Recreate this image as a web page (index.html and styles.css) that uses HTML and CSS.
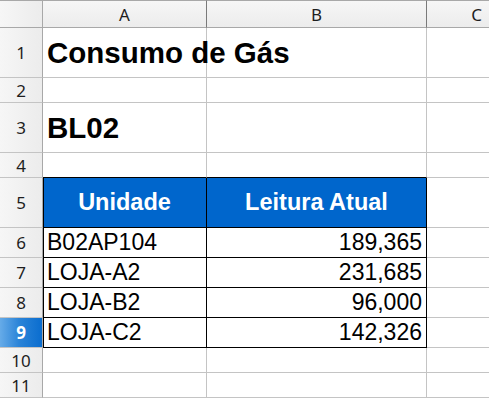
FILE: index.html
```html
<!DOCTYPE html>
<html lang="pt">
<head>
    <meta charset="UTF-8">
    <meta name="viewport" content="width=device-width, initial-scale=1.0">
    <title>Consumo de Gás</title>
    <link rel="stylesheet" href="styles.css">
</head>
<body>
    <div class="sheet">
        <div class="row head-row">
            <div class="rh corner"></div>
            <div class="ch col-a">A</div>
            <div class="ch col-b">B</div>
            <div class="ch col-c">C</div>
        </div>

        <div class="row tall">
            <div class="rh">1</div>
            <div class="cell col-a title">Consumo de Gás</div>
            <div class="cell col-b"></div>
            <div class="cell col-c"></div>
        </div>
        <div class="row short">
            <div class="rh">2</div>
            <div class="cell col-a"></div>
            <div class="cell col-b"></div>
            <div class="cell col-c"></div>
        </div>
        <div class="row tall">
            <div class="rh">3</div>
            <div class="cell col-a title">BL02</div>
            <div class="cell col-b"></div>
            <div class="cell col-c"></div>
        </div>
        <div class="row short">
            <div class="rh">4</div>
            <div class="cell col-a edge-bottom"></div>
            <div class="cell col-b edge-bottom"></div>
            <div class="cell col-c"></div>
        </div>

        <!-- table header -->
        <div class="row tall">
            <div class="rh">5</div>
            <div class="cell col-a boxed th">Unidade</div>
            <div class="cell col-b boxed th">Leitura Atual</div>
            <div class="cell col-c"></div>
        </div>
        <div class="row data">
            <div class="rh">6</div>
            <div class="cell col-a boxed">B02AP104</div>
            <div class="cell col-b boxed num">189,365</div>
            <div class="cell col-c"></div>
        </div>
        <div class="row data">
            <div class="rh">7</div>
            <div class="cell col-a boxed">LOJA-A2</div>
            <div class="cell col-b boxed num">231,685</div>
            <div class="cell col-c"></div>
        </div>
        <div class="row data">
            <div class="rh">8</div>
            <div class="cell col-a boxed">LOJA-B2</div>
            <div class="cell col-b boxed num">96,000</div>
            <div class="cell col-c"></div>
        </div>
        <div class="row data">
            <div class="rh selected">9</div>
            <div class="cell col-a boxed">LOJA-C2</div>
            <div class="cell col-b boxed num">142,326</div>
            <div class="cell col-c"></div>
        </div>

        <div class="row short">
            <div class="rh">10</div>
            <div class="cell col-a"></div>
            <div class="cell col-b"></div>
            <div class="cell col-c"></div>
        </div>
        <div class="row short">
            <div class="rh">11</div>
            <div class="cell col-a"></div>
            <div class="cell col-b"></div>
            <div class="cell col-c"></div>
        </div>
    </div>
</body>
</html>
```

FILE: styles.css
```css
body {
    margin: 0;
    background-color: white;
    overflow: hidden;
}

.sheet {
    width: 489px;
    height: 400px;
    overflow: hidden;
    font-family: "Liberation Sans", Arial, sans-serif;
    color: black;
}

.row {
    display: flex;
}

.head-row {
    height: 28px;
}

.tall {
    height: 50px;
}

.short {
    height: 25px;
}

.data {
    height: 30px;
}

.row > div {
    box-sizing: border-box;
    display: flex;
    align-items: center;
    flex-shrink: 0;
}

.col-a {
    width: 164px;
}

.col-b {
    width: 220px;
}

.col-c {
    width: 100px;
}

/* row and column headers */
.rh {
    width: 43px;
    justify-content: center;
    background: linear-gradient(to right, #f6f6f6, #ececec);
    border-right: 1px solid #a8a8a8;
    border-bottom: 1px solid #c4c4c4;
    font-family: "Noto Sans", "DejaVu Sans", sans-serif;
    font-size: 17px;
    color: #1e1e1e;
}

.rh.corner {
    border-bottom: 1px solid #a8a8a8;
}

.rh.selected {
    background: linear-gradient(to right, #66abe8, #2b84d8 45%, #0a6dcf);
    color: white;
    font-weight: bold;
}

.head-row > div {
    border-top: 1px solid #a8a8a8;
}

.ch {
    justify-content: center;
    background: linear-gradient(to bottom, #f6f6f6, #ececec);
    border-right: 1px solid #7a7a7a;
    border-bottom: 1px solid #a8a8a8;
    font-family: "Noto Sans", "DejaVu Sans", sans-serif;
    font-size: 17px;
    color: #1e1e1e;
}

/* grid cells */
.cell {
    border-right: 1px solid #c4c4c4;
    border-bottom: 1px solid #c4c4c4;
    padding: 0 4px;
    font-size: 23px;
    white-space: nowrap;
}

.title {
    font-size: 29.5px;
    font-weight: bold;
    overflow: visible;
}

.edge-bottom {
    border-bottom-color: black;
}

.boxed {
    border-right-color: black;
    border-bottom-color: black;
}

.boxed.col-a {
    box-shadow: inset 1px 0 0 black;
}

.th {
    justify-content: center;
    background-color: #0066cc;
    color: white;
    font-weight: bold;
    font-size: 23.5px;
}

.num {
    justify-content: flex-end;
}
```
